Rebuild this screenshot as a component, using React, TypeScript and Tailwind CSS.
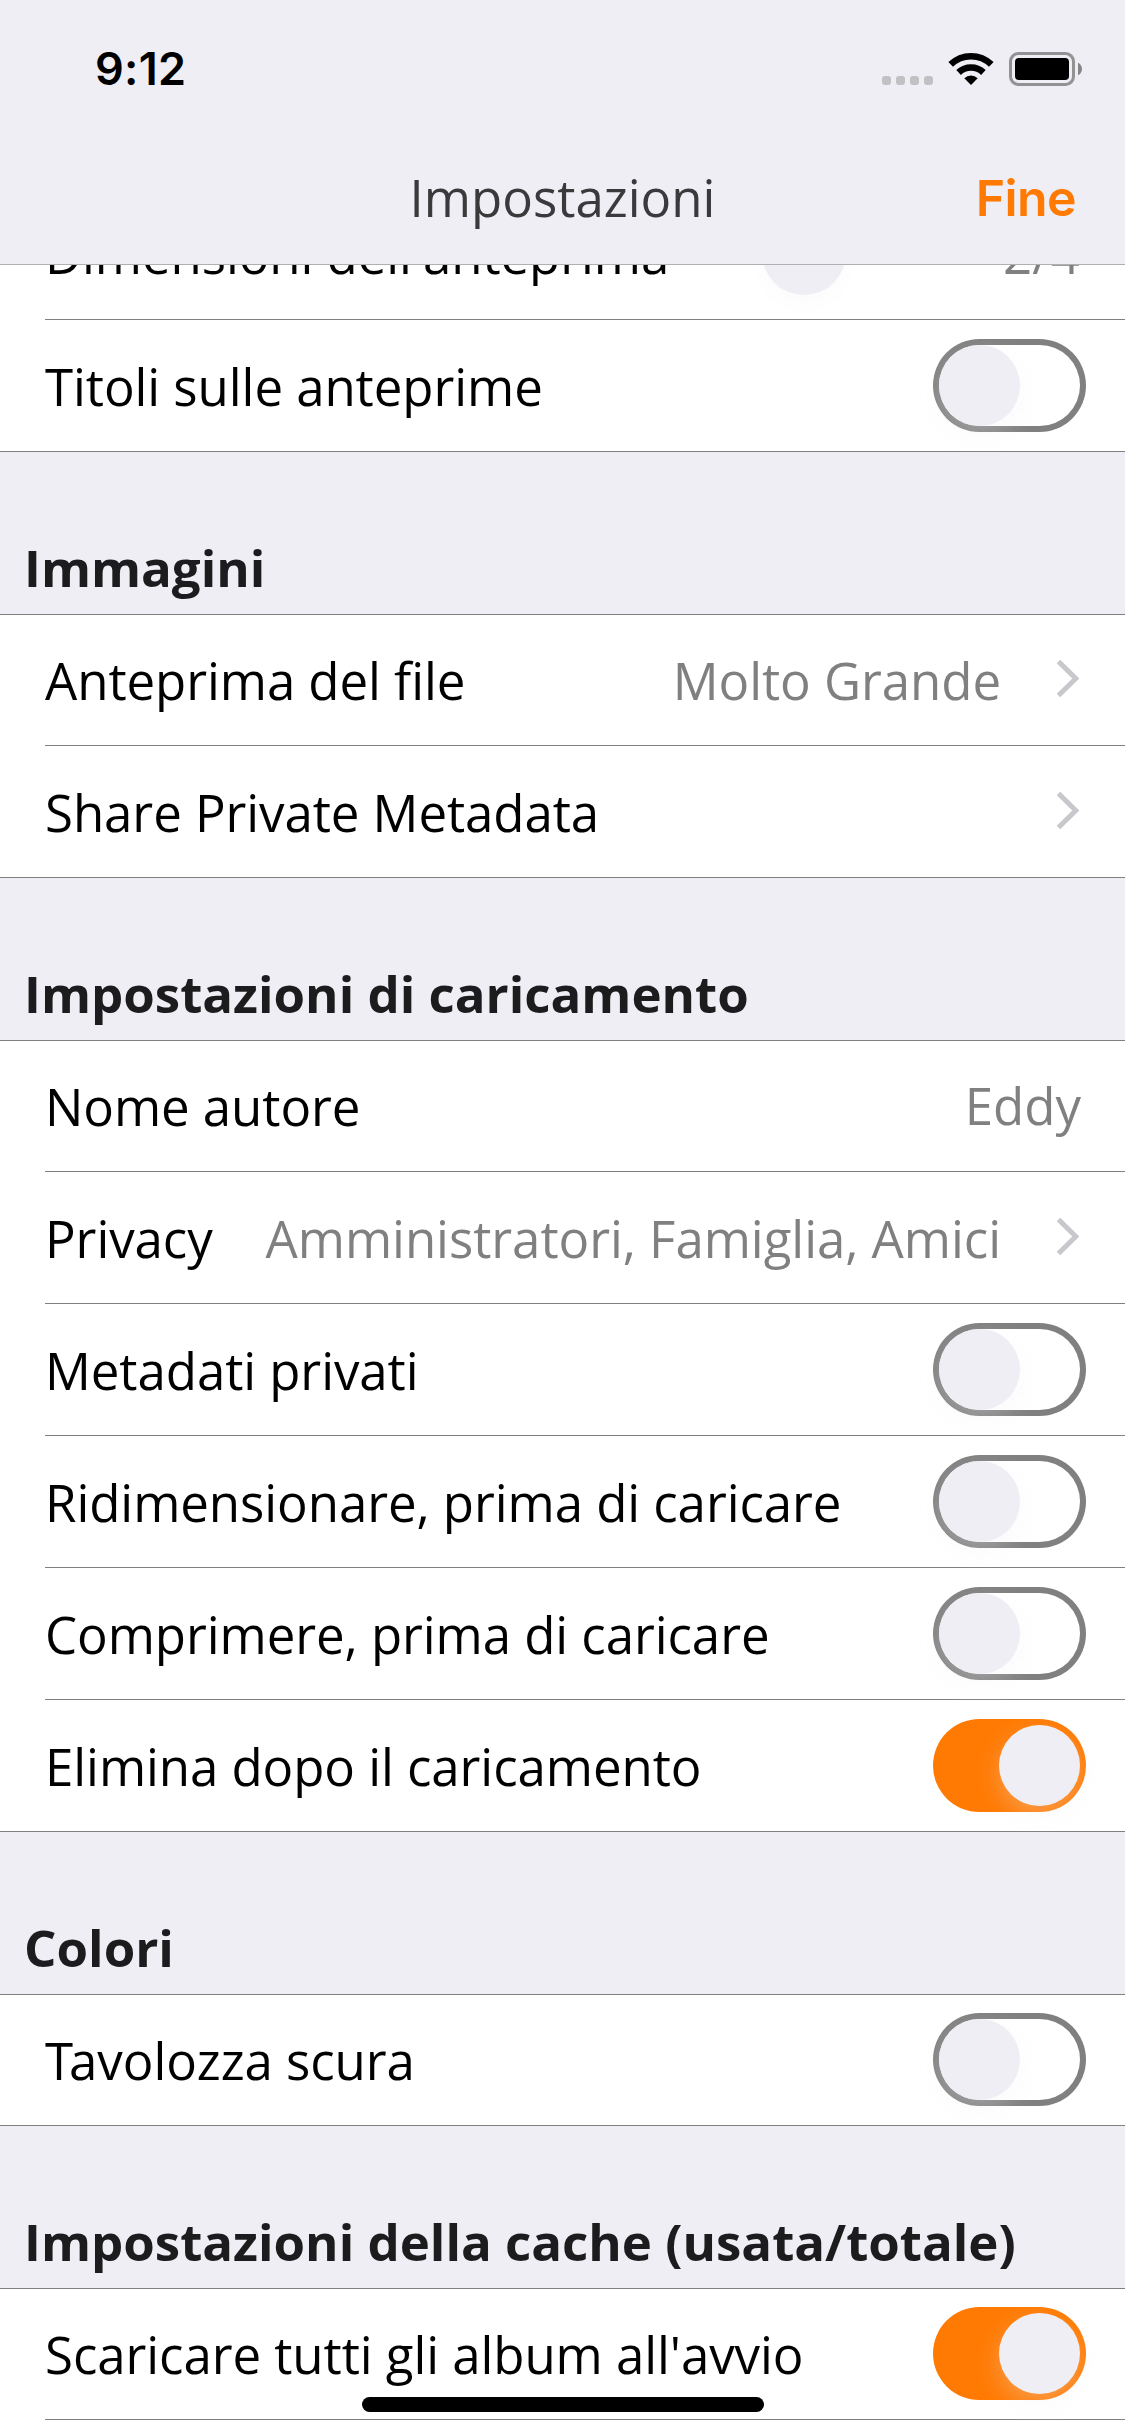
import React from "react";

type Accessory =
  | { kind: "switch"; on: boolean }
  | { kind: "link"; value?: string }
  | { kind: "field"; value: string }
  | { kind: "slider"; value: string };

type RowData = { label: React.ReactNode; accessory: Accessory };
type SectionData = { title?: string; rows: RowData[] };

const off: Accessory = { kind: "switch", on: false };
const on: Accessory = { kind: "switch", on: true };

const sections: SectionData[] = [
  {
    rows: [
      { label: "Dimensioni dell'anteprima", accessory: { kind: "slider", value: "2/4" } },
      { label: "Titoli sulle anteprime", accessory: off },
    ],
  },
  {
    title: "Immagini",
    rows: [
      { label: "Anteprima del file", accessory: { kind: "link", value: "Molto Grande" } },
      { label: "Share Private Metadata", accessory: { kind: "link" } },
    ],
  },
  {
    title: "Impostazioni di caricamento",
    rows: [
      { label: "Nome autore", accessory: { kind: "field", value: "Eddy" } },
      { label: "Privacy", accessory: { kind: "link", value: "Amministratori, Famiglia, Amici" } },
      { label: "Metadati privati", accessory: off },
      { label: "Ridimensionare, prima di caricare", accessory: off },
      { label: "Comprimere, prima di caricare", accessory: off },
      { label: "Elimina dopo il caricamento", accessory: on },
    ],
  },
  {
    title: "Colori",
    rows: [
      {
        // The T is kerned over the following a.
        label: (
          <>
            <span className="tracking-[-4px]">T</span>avolozza scura
          </>
        ),
        accessory: off,
      },
    ],
  },
  {
    title: "Impostazioni della cache (usata/totale)",
    rows: [
      { label: "Scaricare tutti gli album all'avvio", accessory: on },
      { label: "", accessory: { kind: "field", value: "" } },
    ],
  },
];

function Switch({ on }: { on: boolean }) {
  return (
    <div
      role="switch"
      aria-checked={on}
      className={
        "mr-[39px] mb-[19px] flex h-[93px] w-[153px] shrink-0 self-end rounded-full p-[6px] " +
        (on
          ? "justify-end bg-[#ff7a03]"
          : "justify-start shadow-[inset_0_0_0_6px_#808080]")
      }
    >
      <div className="size-[81px] rounded-full bg-[#efeef4] shadow-[0_9px_24px_rgba(239,238,244,0.3)]" />
    </div>
  );
}

function Chevron() {
  return (
    <svg className="mr-[45px] mb-[3px] ml-[55px] h-[39px] w-[24px] shrink-0" viewBox="0 0 24 39" fill="none">
      <path d="M2.5 2.5 19.8 19.5 2.5 36.5" stroke="#c7c7cc" strokeWidth="5" />
    </svg>
  );
}

function Row({ row, first, last }: { row: RowData; first: boolean; last: boolean }) {
  const a = row.accessory;
  return (
    <div className={"flex bg-white " + (first ? "h-[131px]" : "h-[132px]") + (last ? " border-b border-[#808080]" : " pl-[45px]")}>
      <div className={"flex min-w-0 flex-1 items-center justify-between " + (last ? "pl-[45px]" : "border-b border-[#808080]")}>
        <span className="tracking-[-0.07px] whitespace-nowrap text-black">{row.label}</span>
        {a.kind === "switch" && <Switch on={a.on} />}
        {a.kind === "link" && (
          <div className="flex items-center tracking-[-0.05px] whitespace-nowrap text-[#808080]">
            <span>{a.value}</span>
            <Chevron />
          </div>
        )}
        {a.kind === "field" && <span className="mr-[44px] mb-[2px] text-[#808080]">{a.value}</span>}
        {a.kind === "slider" && (
          <div className="mr-[45px] flex items-center text-[#808080]">
            <div className="mr-[157px] mb-[2px] size-[84px] rounded-full bg-[#efeef4] shadow-[0_9px_24px_rgba(0,0,0,0.02)]" />
            <span>{a.value}</span>
          </div>
        )}
      </div>
    </div>
  );
}

function StatusBar() {
  return (
    <div className="flex h-[132px] items-start justify-between">
      <span className="mt-[42px] ml-[95px] font-['Inter'] text-[45px] leading-[54px] font-semibold tracking-[0.3px] text-black">
        9:12
      </span>
      <div className="mt-[52px] mr-[43px] flex items-end">
        <div className="mb-px flex gap-[5px]">
          <span className="size-[9px] rounded-[3px] bg-[#c1c1c4]" />
          <span className="size-[9px] rounded-[3px] bg-[#c1c1c4]" />
          <span className="size-[9px] rounded-[3px] bg-[#c1c1c4]" />
          <span className="size-[9px] rounded-[3px] bg-[#c1c1c4]" />
        </div>
        <svg className="mb-px ml-[15px] h-[33px] w-[46px]" viewBox="0 0 46 33" fill="none">
          <path d="M2.7 12.4a29.2 29.2 0 0 1 40.6 0" stroke="#000" strokeWidth="6.6" />
          <path d="M10.6 20.5a17.9 17.9 0 0 1 24.8 0" stroke="#000" strokeWidth="6.6" />
          <path d="M23 33 16.3 26.2a9.8 9.8 0 0 1 13.4 0Z" fill="#000" />
        </svg>
        <svg className="ml-[15px] h-[34px] w-[73px]" viewBox="0 0 73 34" fill="none">
          <rect x="1.5" y="1.5" width="63" height="31" rx="8" stroke="#929295" strokeWidth="3" />
          <rect x="6" y="6" width="54" height="22" rx="4" fill="#000" />
          <path d="M69 10.7v12.6c2.4-1 4-3.500 4-6.300s-1.600-5.300-4-6.300Z" fill="#858588" />
        </svg>
      </div>
    </div>
  );
}

export default function App() {
  return (
    <div className="relative h-[2436px] w-[1125px] overflow-hidden bg-[#efeef4] font-['Open_Sans',sans-serif] text-[51px] leading-[70px]">
      <header className="relative z-10 h-[265px] border-b border-[#b0b0b3] bg-[#efeef4]">
        <StatusBar />
        <div className="grid h-[132px] grid-cols-[1fr_auto_1fr] items-center">
          <h1 className="col-start-2 mb-[3px] text-[#3a3a3c]">Impostazioni</h1>
          <button className="mr-[49px] justify-self-end font-['Inter'] text-[50px] font-semibold tracking-[-0.6px] text-[#ff7a03]">
            Fine
          </button>
        </div>
      </header>
      <main className="-mt-[77px]">
        {sections.map((section, s) => (
          <section key={s}>
            {section.title && (
              <h2 className="flex h-[163px] items-end border-b border-[#808080] pb-[12px] pl-[24px] font-bold whitespace-nowrap text-[#1c1c1e]">
                {section.title}
              </h2>
            )}
            {section.rows.map((row, i) => (
              <Row
                key={i}
                row={row}
                first={i === 0 && section.title !== undefined}
                last={i === section.rows.length - 1}
              />
            ))}
          </section>
        ))}
      </main>
      <div className="absolute bottom-[24px] left-[362px] h-[15px] w-[402px] rounded-full bg-black" />
    </div>
  );
}
